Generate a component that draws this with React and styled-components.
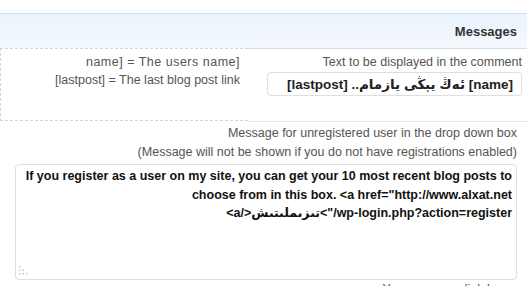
import React from "react";
import styled, { createGlobalStyle } from "styled-components";

const Global = createGlobalStyle`
  html, body { margin: 0; padding: 0; overflow: hidden; background: #fff; }
  body {
    direction: rtl;
    font-family: "Liberation Sans", "DejaVu Sans", Arial, sans-serif;
    font-size: 12.5px;
    color: #555;
  }
`;

const Page = styled.div`
  padding-top: 13px;
  width: 527px;
`;

const Header = styled.div`
  box-sizing: border-box;
  height: 35px;
  border-top: 1px solid #d3e1ec;
  background: linear-gradient(to bottom, #eaf3fc, #f4f9fe);
  display: flex;
  align-items: center;
  padding-right: 10px;
  font-size: 13px;
  font-weight: bold;
  color: #333;
`;

const Row = styled.div`
  display: grid;
  grid-template-columns: 279px 248px;
  align-items: start;
`;

const MainCell = styled.div`
  box-sizing: border-box;
  height: 74px;
  border-top: 1px solid #d3e1ec;
  border-bottom: 1px solid #dce8f2;
  display: flex;
  flex-direction: column;
  align-items: flex-start;
  padding: 6px 5px 0 0;
`;

const HelpCell = styled.div`
  box-sizing: border-box;
  height: 73px;
  border-top: 1px dashed #d4d4d4;
  border-bottom: 1px dashed #d4d4d4;
  border-left: 1px dashed #d4d4d4;
  padding: 4px 8px 0 0;
  display: flex;
  flex-direction: column;
`;

const Label = styled.div`
  line-height: ${(p) => p.$lh || 14}px;
  color: #555;
  white-space: nowrap;
`;

const HelpLine = styled.div`
  direction: ltr;
  text-align: right;
  line-height: 18px;
  color: #555;
  white-space: nowrap;
  letter-spacing: ${(p) => p.$ls || 0}px;
`;

const TextInput = styled.input`
  box-sizing: border-box;
  direction: rtl;
  width: 255px;
  height: 24px;
  margin-top: 3px;
  border: 1px solid #dfdfdf;
  border-radius: 4px;
  padding: 0 8px;
  font-family: "Liberation Sans", "DejaVu Sans", Arial, sans-serif;
  font-size: 13.5px;
  font-weight: bold;
  color: #222;
  background: #fff;
  outline: none;
`;

const FullCell = styled.div`
  padding: 2px 10px 0 15px;
  display: flex;
  flex-direction: column;
  align-items: flex-start;
`;

const AreaWrap = styled.div`
  position: relative;
  width: 502px;
  margin-top: 2px;
`;

const TextArea = styled.textarea`
  box-sizing: border-box;
  display: block;
  direction: rtl;
  width: 502px;
  height: 116px;
  border: 1px solid #dfdfdf;
  border-radius: 4px;
  padding: 2px 4px;
  resize: none;
  font-family: "Liberation Sans", "DejaVu Sans", Arial, sans-serif;
  font-size: 12.5px;
  font-weight: bold;
  line-height: 18.5px;
  color: #111;
  background: #fff;
  outline: none;
  overflow: hidden;
`;

const Grip = styled.svg`
  position: absolute;
  left: 4px;
  bottom: 5px;
`;

const Note = styled.div`
  margin-top: 2px;
  padding-right: 5px;
  line-height: 14px;
  color: #555;
`;

const glue = (s) => s.split("").join("\u2060");

const areaText =
  'If you register as a user on my site, you can get your 10 most recent blog posts to choose from in this box. <a href="' +
  glue("http://www.alxat.net") +
  "\u200B" +
  glue('/wp-login.php?action=register">') +
  "تىزىملىتىش</a>";

export default function App() {
  return (
    <>
      <Global />
      <Page>
        <Header>Messages</Header>
        <Row>
          <MainCell>
            <Label>Text to be displayed in the comment</Label>
            <TextInput readOnly value="[name] ئەڭ يېڭى يازمام.. [lastpost]" />
          </MainCell>
          <HelpCell>
            <HelpLine $ls={0.5}>name] = The users name]</HelpLine>
            <HelpLine>[lastpost] = The last blog post link</HelpLine>
          </HelpCell>
        </Row>
        <FullCell>
          <Label $lh={19}>Message for unregistered user in the drop down box</Label>
          <Label $lh={19}>(Message will not be shown if you do not have registrations enabled)</Label>
          <AreaWrap>
            <TextArea readOnly value={areaText} />
            <Grip width="9" height="9" viewBox="0 0 9 9">
              <g fill="#c8c8c8">
                <rect x="0" y="0" width="1.5" height="1.5" />
                <rect x="0" y="3.5" width="1.5" height="1.5" />
                <rect x="0" y="7" width="1.5" height="1.5" />
                <rect x="3.5" y="3.5" width="1.5" height="1.5" />
                <rect x="3.5" y="7" width="1.5" height="1.5" />
                <rect x="7" y="7" width="1.5" height="1.5" />
              </g>
            </Grip>
          </AreaWrap>
          <Note>You can use a link here</Note>
        </FullCell>
      </Page>
    </>
  );
}
